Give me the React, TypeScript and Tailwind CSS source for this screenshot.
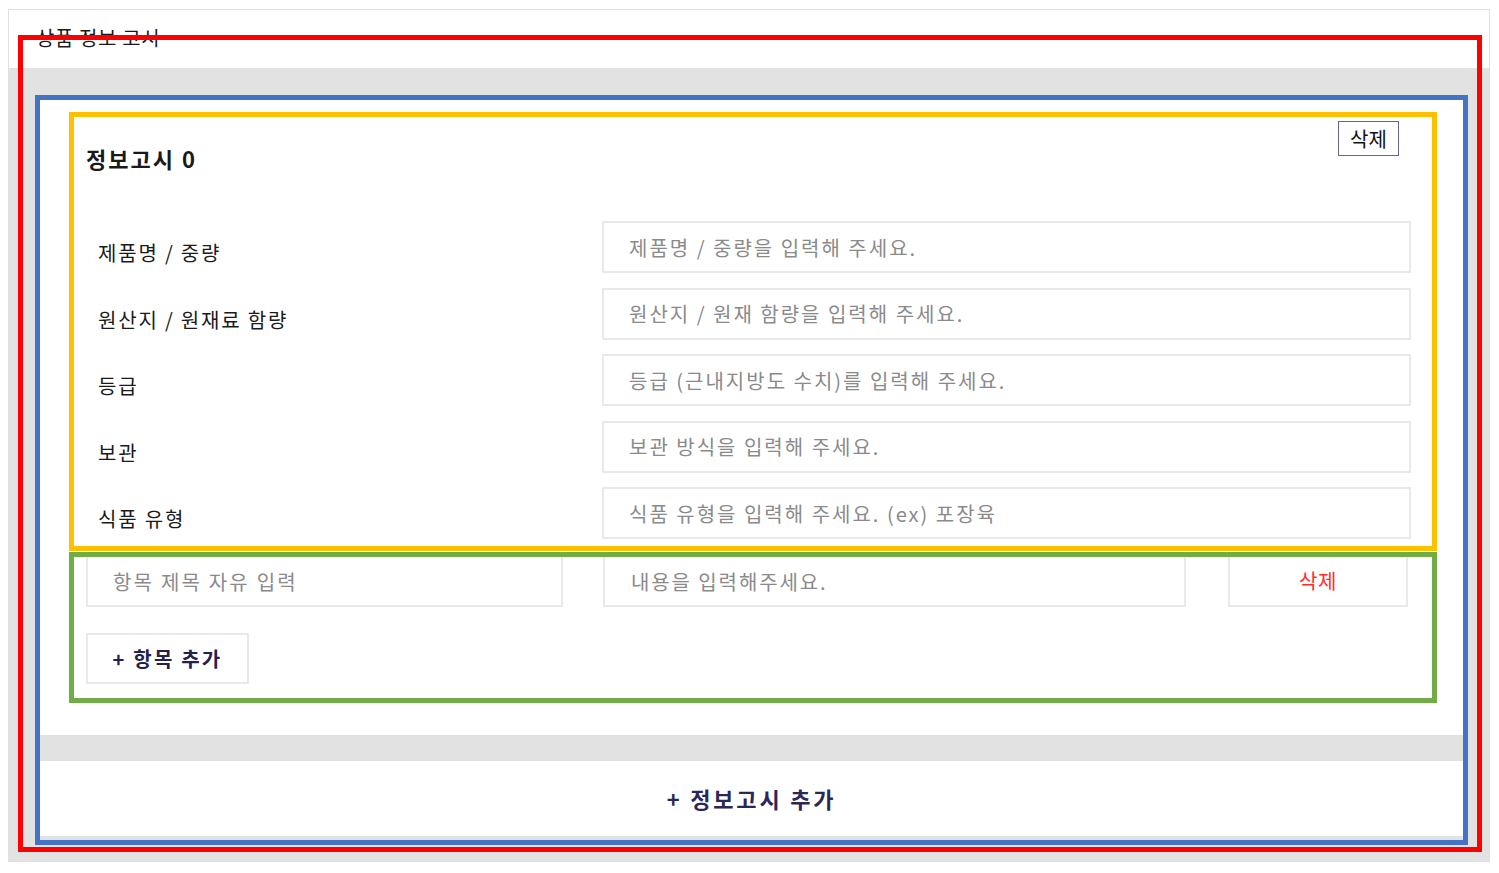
export default function App() {
  const rows: [string, string][] = [
    ['제품명 / 중량', '제품명 / 중량을 입력해 주세요.'],
    ['원산지 / 원재료 함량', '원산지 / 원재 함량을 입력해 주세요.'],
    ['등급', '등급 (근내지방도 수치)를 입력해 주세요.'],
    ['보관', '보관 방식을 입력해 주세요.'],
    ['식품 유형', '식품 유형을 입력해 주세요. (ex) 포장육'],
  ];
  return (
    <div className="relative w-[1499px] h-[873px] bg-white pt-[9px] pl-[8px] font-['Noto_Sans_CJK_KR','Noto_Sans',sans-serif] text-[#1a1a1a]">
      <div className="w-[1482px] h-[853px] border border-[#e0e0e0] flex flex-col">
        <div className="h-[58px] flex items-center pl-[27px] pb-[2px]">
          <span className="text-[20px] tracking-[0.6px] leading-[26px]">상품 정보 고시</span>
        </div>
        <div className="flex-1 bg-[#e2e2e2] pt-[29px] pl-[30px] pr-[25px]">
          <div className="h-[638px] bg-white pl-[47px] pr-[53px] pt-[24px]">
            <div className="flex justify-between items-start">
              <div className="mt-[22px] text-[22px] leading-[30px] font-bold tracking-[2px]">정보고시 0</div>
              <button className="mr-[12px] w-[61px] h-[35px] border-[1.5px] border-[#676392] bg-white text-[20px] leading-[26px] text-[#111]">
                삭제
              </button>
            </div>
            <div className="mt-[48px] flex flex-col gap-[14.5px]">
              {rows.map(([label, ph]) => (
                <div key={label} className="flex h-[52px]">
                  <div className="w-[516px] pl-[12px] pt-[19px] text-[20px] leading-[26px] tracking-[1.8px]">{label}</div>
                  <input
                    className="w-[809px] h-[52px] border-2 border-[#e9e9e9] px-[25px] text-[20px] tracking-[2px] outline-none placeholder:text-[#8a8a8a]"
                    placeholder={ph}
                  />
                </div>
              ))}
            </div>
            <div className="mt-[16px] flex h-[52px]">
              <input
                className="w-[477px] h-[52px] border-2 border-[#e9e9e9] px-[25px] text-[20px] tracking-[2.2px] outline-none placeholder:text-[#8a8a8a]"
                placeholder="항목 제목 자유 입력"
              />
              <input
                className="ml-[40px] w-[583px] h-[52px] border-2 border-[#e9e9e9] px-[26px] text-[20px] tracking-[1.9px] outline-none placeholder:text-[#8a8a8a]"
                placeholder="내용을 입력해주세요."
              />
              <button className="ml-[42px] w-[180px] h-[52px] border-2 border-[#e9e9e9] bg-white text-[20px] text-[#ff2b2b] tracking-[0.5px]">
                삭제
              </button>
            </div>
            <button className="mt-[26px] w-[163px] h-[51px] border-2 border-[#e9e9e9] bg-white text-[20px] font-bold text-[#23214f] tracking-[2.2px]">
              + 항목 추가
            </button>
          </div>
          <div className="mt-[26px] h-[75px] bg-white flex items-center justify-center">
            <span className="text-[22px] font-bold text-[#2a2858] tracking-[2.8px]">+ 정보고시 추가</span>
          </div>
        </div>
      </div>

      <div className="pointer-events-none absolute left-[18px] top-[35px] w-[1464px] h-[817px] border-[5px] border-[#ff0000]" />
      <div className="pointer-events-none absolute left-[35px] top-[95px] w-[1433px] h-[750px] border-[5px] border-[#4472c4]" />
      <div className="pointer-events-none absolute left-[69px] top-[112px] w-[1368px] h-[439px] border-[5px] border-[#ffc000]" />
      <div className="pointer-events-none absolute left-[69px] top-[552px] w-[1368px] h-[151px] border-[5px] border-[#70ad47]" />
    </div>
  );
}
